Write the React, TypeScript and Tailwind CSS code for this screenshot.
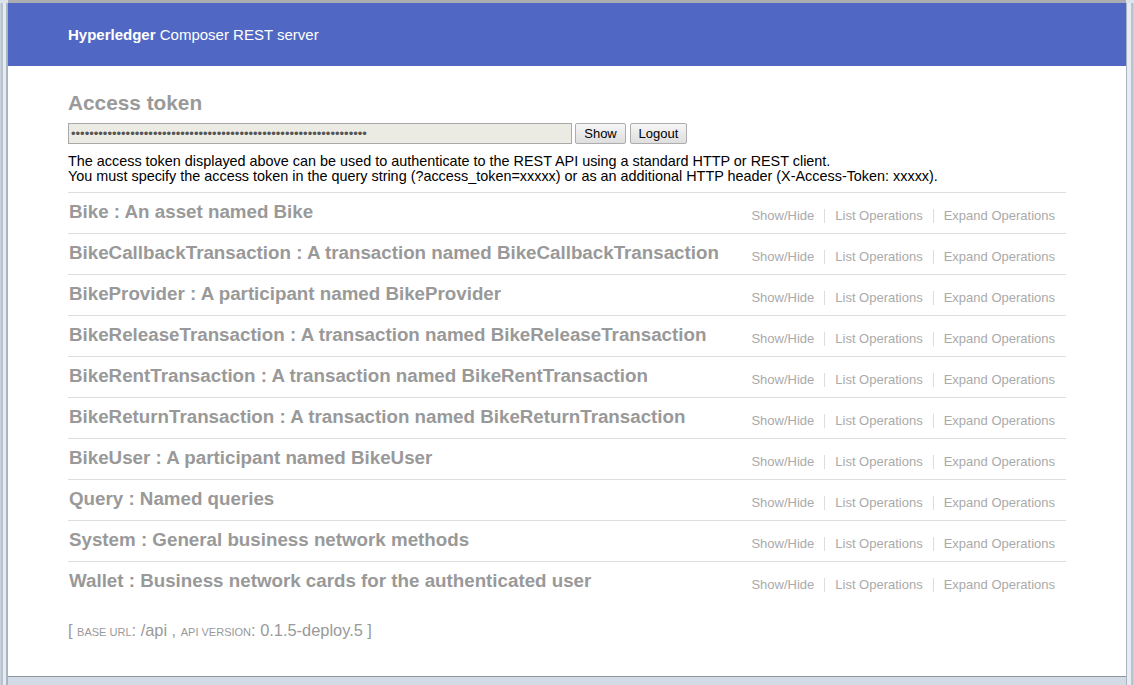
import React from "react";

const resources = [
  "Bike : An asset named Bike",
  "BikeCallbackTransaction : A transaction named BikeCallbackTransaction",
  "BikeProvider : A participant named BikeProvider",
  "BikeReleaseTransaction : A transaction named BikeReleaseTransaction",
  "BikeRentTransaction : A transaction named BikeRentTransaction",
  "BikeReturnTransaction : A transaction named BikeReturnTransaction",
  "BikeUser : A participant named BikeUser",
  "Query : Named queries",
  "System : General business network methods",
  "Wallet : Business network cards for the authenticated user",
];

export default function App() {
  const token = "x".repeat(65);
  return (
    <div
      className="w-[1134px] h-[685px] bg-[#dbe3ec] flex flex-col overflow-hidden"
      style={{ fontFamily: '"Liberation Sans", Arial, sans-serif' }}
    >
      <div className="h-[3px] bg-[#a9adb2] ml-[8px] mr-[8px]" />
      <div className="flex-1 flex">
        <div className="w-[8px] flex">
          <div className="w-[1px] bg-[#c9d2dc]" />
          <div className="w-[2px] bg-[#b6c2ce]" />
          <div className="w-[3px] bg-[#e6ecf2]" />
          <div className="w-[2px] bg-[#aab4bf]" />
        </div>
        <div className="flex-1 flex flex-col">
          <div className="h-[674px] bg-white flex flex-col border-b border-[#8b96a2]">
            <div className="h-[63px] bg-[#5068c4] flex items-center px-[60px] pt-[2px]">
              <span className="text-white text-[15px]">
                <span className="font-bold">Hyperledger</span> Composer REST server
              </span>
            </div>
            <div className="px-[60px]">
              <h2 className="mt-[25px] text-[20.8px] leading-[24px] font-bold text-[#999999]">
                Access token
              </h2>
              <div className="mt-[8px] flex items-center gap-[3px] h-[21px]">
                <input
                  type="password"
                  readOnly
                  value={token}
                  className="w-[504px] h-[21px] bg-[#ebebe4] border border-[#a9a9a9] px-[2px] text-[13px] text-[#555] outline-none"
                />
                <button className="h-[21px] w-[51px] text-[13px] text-black border border-[#adadad] rounded-[2px] bg-gradient-to-b from-[#f6f6f6] to-[#dedede]">
                  Show
                </button>
                <button className="h-[21px] w-[57px] ml-[1px] text-[13px] text-black border border-[#adadad] rounded-[2px] bg-gradient-to-b from-[#f6f6f6] to-[#dedede]">
                  Logout
                </button>
              </div>
              <p className="mt-[10px] text-[14.4px] leading-[15px] text-black whitespace-nowrap">
                The access token displayed above can be used to authenticate to the REST API using a standard HTTP or REST client.
                <br />
                You must specify the access token in the query string (?access_token=xxxxx) or as an additional HTTP header (X-Access-Token: xxxxx).
              </p>
              <ul className="mt-[8px]">
                {resources.map((r) => (
                  <li
                    key={r}
                    className="h-[41px] border-t border-[#dddddd] flex justify-between items-baseline pt-[8px]"
                  >
                    <h2 className="text-[18.75px] leading-[22px] font-bold text-[#999999] pl-[1px]">
                      {r}
                    </h2>
                    <ul className="flex text-[13px] text-[#aaaaaa] pr-[1px] relative top-[2px]">
                      <li className="px-[10px] border-r border-[#dddddd] leading-[14px]">Show/Hide</li>
                      <li className="px-[10px] border-r border-[#dddddd] leading-[14px]">List Operations</li>
                      <li className="px-[10px] leading-[14px]">Expand Operations</li>
                    </ul>
                  </li>
                ))}
              </ul>
              <div className="mt-[18px] text-[16.4px] leading-[20px] text-[#999999]">
                [ <span className="text-[11px] uppercase">base url</span>: /api ,{" "}
                <span className="text-[11px] uppercase">api version</span>: 0.1.5-deploy.5 ]
              </div>
            </div>
          </div>
          <div className="flex-1 bg-[#d3dce6]" />
        </div>
        <div className="w-[8px] flex">
          <div className="w-[1px] bg-[#aab4bf]" />
          <div className="w-[4px] bg-[#e6ecf2]" />
          <div className="w-[2px] bg-[#b6c2ce]" />
          <div className="w-[1px] bg-[#c9d2dc]" />
        </div>
      </div>
    </div>
  );
}
